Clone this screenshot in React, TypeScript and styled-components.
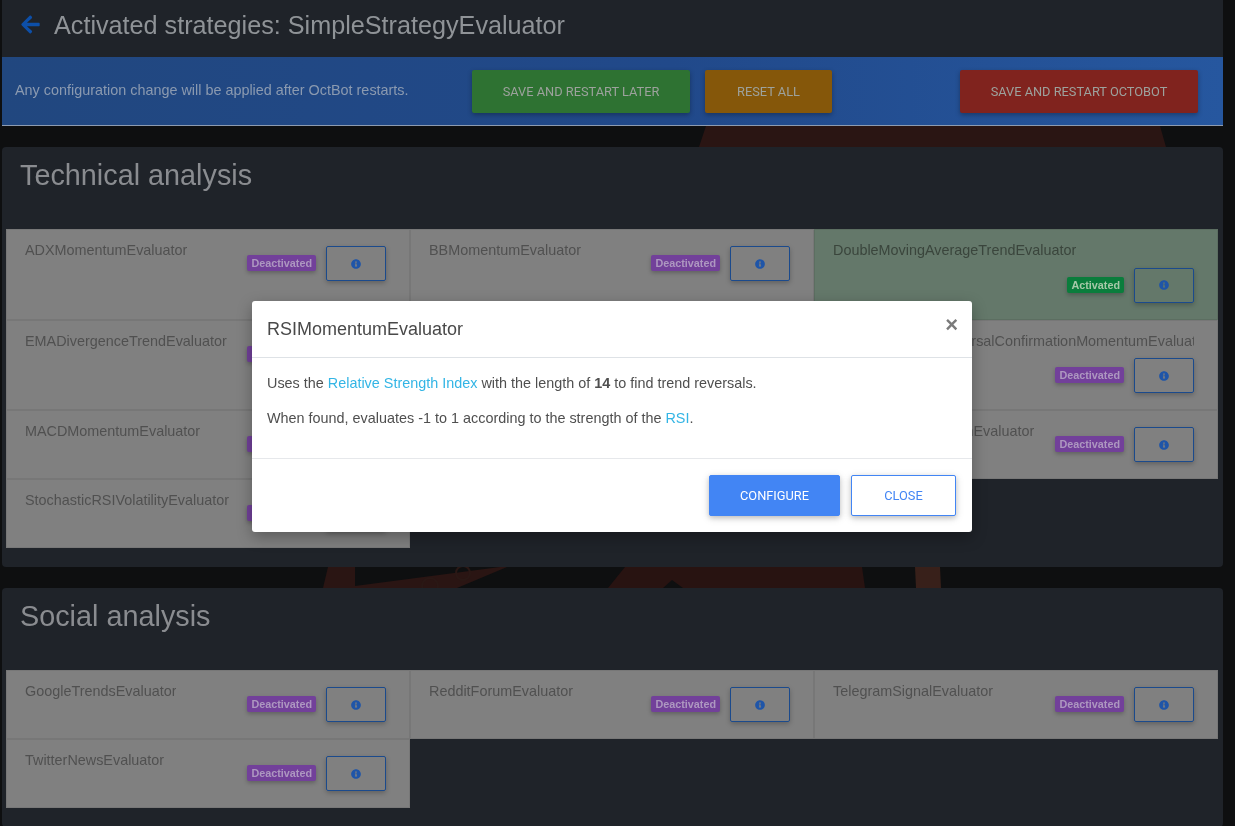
import React from "react";
import styled, { createGlobalStyle } from "styled-components";
import { FaArrowLeft, FaInfoCircle } from "react-icons/fa";

const Global = createGlobalStyle`
  html, body { margin: 0; padding: 0; height: 100%; overflow: hidden; background: #0e0f10; }
  body { font-family: "Liberation Sans", Arial, sans-serif; font-size: 14.4px; }
  * { box-sizing: border-box; }
`;

const Backdrop = styled.svg`
  position: fixed;
  inset: 0;
  width: 1235px;
  height: 826px;
  z-index: 0;
`;

const Page = styled.div`
  position: relative;
  z-index: 1;
  padding: 0 12px 0 2px;
  height: 826px;
  overflow: hidden;
`;

const TopPanel = styled.header`
  height: 57px;
  background: #1f2329;
  display: flex;
  align-items: center;
  padding: 0 0 8px 18px;
  gap: 13px;
  color: #0d4fa8;
`;

const PageTitle = styled.h1`
  margin: 0;
  font-size: 25.2px;
  line-height: 36px;
  font-weight: 400;
  color: #8f9397;
`;

const Banner = styled.div`
  height: 69px;
  background: linear-gradient(90deg, #21477f 0%, #21498a 55%, #26579f 100%);
  border-bottom: 1px solid #8d9bb0;
  display: flex;
  align-items: flex-start;
  padding: 13px 25px 0 13px;
`;

const BannerText = styled.div`
  flex: 0 0 457px;
  padding-top: 10px;
  line-height: 20px;
  font-size: 14.4px;
  color: #8b9ab0;
`;

const BannerActions = styled.div`
  flex: 1;
  display: flex;
  gap: 15px;
`;

const ActionButton = styled.div<{ $bg: string; $w: number; $far?: boolean }>`
  width: ${(p) => p.$w}px;
  height: 43px;
  margin-left: ${(p) => (p.$far ? "auto" : 0)};
  border-radius: 2px;
  background: ${(p) => p.$bg};
  box-shadow: 0 2px 5px rgba(0, 0, 0, 0.3);
  color: #9da29d;
  font-family: Roboto, "Liberation Sans", sans-serif;
  font-size: 12.8px;
  display: flex;
  align-items: center;
  justify-content: center;
  text-transform: uppercase;
`;

const Section = styled.section`
  margin-top: 21px;
  background: #1f2329;
  border-radius: 4px;
  padding: 0 5px 19px 4px;
`;

const SectionTitle = styled.h2`
  margin: 0;
  height: 82px;
  padding: 9px 0 0 14px;
  font-size: 28.8px;
  line-height: 38px;
  font-weight: 400;
  color: #8a8c90;
`;

const Grid = styled.div`
  display: grid;
  grid-template-columns: repeat(3, 404px);
`;

const Card = styled.div<{ $active?: boolean }>`
  display: flex;
  flex-wrap: wrap;
  align-items: flex-start;
  padding: 10px 23px 10px 18px;
  background: ${(p) => (p.$active ? "#64786a" : "#808080")};
  border: 1px solid ${(p) => (p.$active ? "#5c6e61" : "#777777")};
`;

const Name = styled.div<{ $active?: boolean }>`
  max-width: calc(100% + 2px);
  overflow: hidden;
  white-space: nowrap;
  line-height: 21.6px;
  font-size: 14.4px;
  color: ${(p) => (p.$active ? "#3a453c" : "#505050")};
`;

const Controls = styled.div`
  margin: 6px 0 6px auto;
  display: flex;
  align-items: center;
  gap: 10px;
`;

const Badge = styled.span<{ $active?: boolean }>`
  height: 16px;
  margin-top: -1px;
  padding: 0 4px;
  border-radius: 2px;
  background: ${(p) => (p.$active ? "#0a7d3c" : "#72409a")};
  color: ${(p) => (p.$active ? "#a6c8a8" : "#ad97c0")};
  font-size: 10.8px;
  font-weight: 700;
  line-height: 16px;
  box-shadow: 0 2px 4px rgba(0, 0, 0, 0.25);
`;

const InfoButton = styled.div`
  width: 60px;
  height: 35px;
  border: 1px solid #1b4a8c;
  border-radius: 2px;
  color: #1f55a8;
  display: flex;
  align-items: center;
  justify-content: center;
  box-shadow: 0 2px 5px rgba(0, 0, 0, 0.25);
`;

const Modal = styled.div`
  position: fixed;
  z-index: 2;
  left: 252px;
  top: 301px;
  width: 720px;
  height: 231px;
  background: #fff;
  border-radius: 3px;
  box-shadow: 0 5px 15px rgba(0, 0, 0, 0.3);
  display: flex;
  flex-direction: column;
`;

const ModalHeader = styled.div`
  height: 57px;
  border-bottom: 1px solid #dee2e6;
  padding: 0 14px 0 15px;
  display: flex;
  align-items: center;
  justify-content: space-between;
`;

const ModalTitle = styled.div`
  font-size: 18px;
  line-height: 27px;
  padding-top: 1px;
  color: #494949;
`;

const CloseMark = styled.span`
  font-size: 22px;
  font-weight: 700;
  line-height: 24px;
  margin-top: -9px;
  color: #7b7b7b;
`;

const ModalBody = styled.div`
  height: 101px;
  padding: 15px 15px 0;
  border-bottom: 1px solid #e6e8eb;
`;

const Para = styled.p`
  margin: 0 0 13.4px;
  font-size: 14.4px;
  line-height: 21.6px;
  color: #4f4f4f;
`;

const Link = styled.a`
  color: #33b5e5;
`;

const ModalFooter = styled.div`
  flex: 1;
  padding: 16px;
  display: flex;
  justify-content: flex-end;
  gap: 11px;
`;

const ModalButton = styled.div<{ $solid?: boolean }>`
  width: ${(p) => (p.$solid ? 131 : 105)}px;
  height: 41px;
  border-radius: 2px;
  border: 1px solid #4285f4;
  background: ${(p) => (p.$solid ? "#4285f4" : "#fff")};
  color: ${(p) => (p.$solid ? "#fff" : "#4285f4")};
  font-family: Roboto, "Liberation Sans", sans-serif;
  font-size: 12.8px;
  display: flex;
  align-items: center;
  justify-content: center;
  text-transform: uppercase;
  box-shadow: 0 2px 5px rgba(0, 0, 0, 0.18), 0 2px 10px rgba(0, 0, 0, 0.12);
`;

type Ev = { name: string; active?: boolean };

const technical: Ev[] = [
  { name: "ADXMomentumEvaluator" },
  { name: "BBMomentumEvaluator" },
  { name: "DoubleMovingAverageTrendEvaluator", active: true },
  { name: "EMADivergenceTrendEvaluator" },
  { name: "KlingerOscillatorMomentumEvaluator" },
  { name: "KlingerOscillatorReversalConfirmationMomentumEvaluator" },
  { name: "MACDMomentumEvaluator" },
  { name: "RSIMomentumEvaluator" },
  { name: "RSIWeightMomentumEvaluator" },
  { name: "StochasticRSIVolatilityEvaluator" },
];

const social: Ev[] = [
  { name: "GoogleTrendsEvaluator" },
  { name: "RedditForumEvaluator" },
  { name: "TelegramSignalEvaluator" },
  { name: "TwitterNewsEvaluator" },
];

const Evaluators = ({ items }: { items: Ev[] }) => (
  <Grid>
    {items.map((e) => (
      <Card key={e.name} $active={e.active}>
        <Name $active={e.active}>{e.name}</Name>
        <Controls>
          <Badge $active={e.active}>{e.active ? "Activated" : "Deactivated"}</Badge>
          <InfoButton>
            <FaInfoCircle size={10} />
          </InfoButton>
        </Controls>
      </Card>
    ))}
  </Grid>
);

export default function App() {
  return (
    <>
      <Global />
      <Backdrop viewBox="0 0 1235 826">
        <polygon points="706,126 1160,126 1166,147 699,147" fill="#2a1513" />
        <polygon points="328,567 355,567 355,588 323,588" fill="#2a1513" />
        <polygon points="355,586 500,567 507,567 457,588 355,588" fill="#2a1513" />
        <circle cx="463" cy="573" r="7" fill="none" stroke="#2a1815" strokeWidth="2" />
        <circle cx="430" cy="586" r="8" fill="none" stroke="#2a1815" strokeWidth="2" />
        <polygon points="625,567 862,567 865,588 608,588" fill="#281311" />
        <polygon points="663,588 672,580 683,588" fill="#0e0f10" />
        <polygon points="915,567 940,567 941,588 916,588" fill="#38201a" />
      </Backdrop>
      <Page>
        <TopPanel>
          <FaArrowLeft size={21} />
          <PageTitle>Activated strategies: SimpleStrategyEvaluator</PageTitle>
        </TopPanel>
        <Banner>
          <BannerText>Any configuration change will be applied after OctBot restarts.</BannerText>
          <BannerActions>
            <ActionButton $bg="#2e7232" $w={218}>Save and restart later</ActionButton>
            <ActionButton $bg="#85570a" $w={127}>Reset all</ActionButton>
            <ActionButton $bg="#80231e" $w={238} $far>Save and restart OctoBot</ActionButton>
          </BannerActions>
        </Banner>
        <Section>
          <SectionTitle>Technical analysis</SectionTitle>
          <Evaluators items={technical} />
        </Section>
        <Section>
          <SectionTitle>Social analysis</SectionTitle>
          <Evaluators items={social} />
        </Section>
      </Page>
      <Modal>
        <ModalHeader>
          <ModalTitle>RSIMomentumEvaluator</ModalTitle>
          <CloseMark>×</CloseMark>
        </ModalHeader>
        <ModalBody>
          <Para>
            Uses the <Link>Relative Strength Index</Link> with the length of <b>14</b> to find trend reversals.
          </Para>
          <Para>
            When found, evaluates -1 to 1 according to the strength of the <Link>RSI</Link>.
          </Para>
        </ModalBody>
        <ModalFooter>
          <ModalButton $solid>Configure</ModalButton>
          <ModalButton>Close</ModalButton>
        </ModalFooter>
      </Modal>
    </>
  );
}
